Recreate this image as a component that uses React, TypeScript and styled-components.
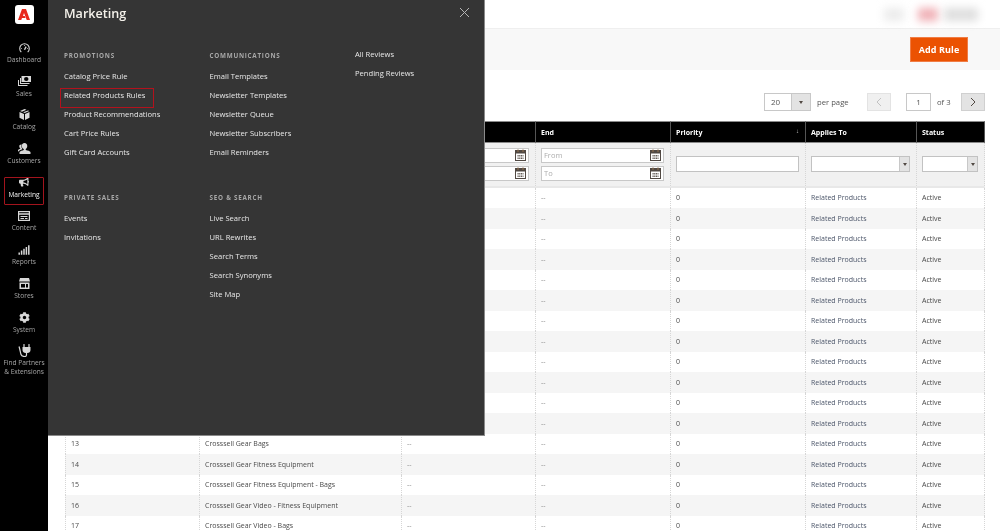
import React from "react";
import styled, { createGlobalStyle } from "styled-components";
import { FaBullhorn, FaCog, FaSignal } from "react-icons/fa";

const Global = createGlobalStyle`
  html, body { margin: 0; padding: 0; height: 531px; overflow: hidden; background: #fff; }
  body { font-family: "Open Sans", "Liberation Sans", sans-serif; color: #303030; }
  * { box-sizing: border-box; }
`;

const Shell = styled.div`
  display: flex;
  position: relative;
  width: 1000px;
  height: 531px;
  overflow: hidden;
  will-change: transform;
`;

const Sidebar = styled.nav`
  flex: 0 0 48px;
  background: #000;
  display: flex;
  flex-direction: column;
  align-items: center;
  padding-top: 5px;
`;

const Logo = styled.div`
  width: 19px;
  height: 19px;
  border-radius: 3px;
  background: #fff;
  display: flex;
  align-items: center;
  justify-content: center;
  margin-bottom: 17px;
`;

const NavItem = styled.a<{ $active?: boolean }>`
  position: relative;
  display: flex;
  flex-direction: column;
  align-items: center;
  width: 48px;
  height: 33.7px;
  color: ${(p) => (p.$active ? "#f4f4f4" : "#a6a6a6")};
  font-size: 6.6px;
  line-height: 9px;
  text-align: center;
  white-space: nowrap;
  ${(p) =>
    p.$active
      ? `&::after { content: ""; position: absolute; left: 4px; top: 1px; width: 38px; height: 26px; border: 1px solid #a3141d; border-radius: 1px; }`
      : ""}
`;

const NavIcon = styled.span`
  height: 13px;
  margin-bottom: 1px;
  color: #d8d8d8;
  display: flex;
  align-items: center;
  justify-content: center;
  font-size: 10px;
`;

const Main = styled.main`
  flex: 1;
  min-width: 0;
  display: flex;
  flex-direction: column;
`;

const TopBar = styled.header`
  height: 29px;
  flex: none;
  display: flex;
  justify-content: flex-end;
  align-items: center;
  padding-right: 22px;
  border-bottom: 1px solid #efefef;
`;

const Blur = styled.span<{ $w: number; $c: string; $mr?: number }>`
  width: ${(p) => p.$w}px;
  height: 13px;
  background: ${(p) => p.$c};
  filter: blur(4px);
  margin-right: ${(p) => p.$mr ?? 0}px;
`;

const ActionBar = styled.div`
  height: 41px;
  flex: none;
  background: #f8f8f8;
  display: flex;
  justify-content: flex-end;
  align-items: flex-start;
  padding: 8px 32px 0 0;
`;

const AddButton = styled.button`
  width: 58px;
  height: 25px;
  background: #eb5202;
  border: 1px solid #f07d45;
  color: #fff;
  font: 700 9px "Open Sans", sans-serif;
  letter-spacing: 0.1px;
  padding: 0;
`;

const Pager = styled.div`
  height: 51px;
  flex: none;
  display: flex;
  justify-content: flex-end;
  align-items: flex-start;
  padding: 23px 15px 0 0;
  font-size: 8px;
  color: #555;
`;

const PageSelect = styled.div`
  width: 47px;
  height: 18px;
  display: flex;
  border: 1px solid #c8c8c8;
  background: #fff;
  margin-right: 6px;
`;

const PageValue = styled.span`
  flex: 1;
  padding-left: 6px;
  line-height: 16px;
`;

const Arrow = styled.span<{ $w: number }>`
  width: ${(p) => p.$w}px;
  flex: none;
  align-self: stretch;
  background: #e3e3e3;
  border-left: 1px solid #c8c8c8;
  display: flex;
  align-items: center;
  justify-content: center;
  &::after {
    content: "";
    border-left: 2.5px solid transparent;
    border-right: 2.5px solid transparent;
    border-top: 3px solid #514943;
  }
`;

const PagerText = styled.span<{ $w: number; $mr: number }>`
  width: ${(p) => p.$w}px;
  line-height: 18px;
  font-size: 7.7px;
  white-space: nowrap;
  margin-right: ${(p) => p.$mr}px;
`;

const PageBtn = styled.span<{ $off?: boolean }>`
  width: 24px;
  height: 18px;
  display: flex;
  align-items: center;
  justify-content: center;
  background: ${(p) => (p.$off ? "#f0f0f0" : "#e3e3e3")};
  border: 1px solid ${(p) => (p.$off ? "#e3e3e3" : "#d0d0d0")};
`;

const PageInput = styled.span`
  width: 25px;
  height: 18px;
  margin: 0 6px 0 15px;
  border: 1px solid #c8c8c8;
  text-align: center;
  line-height: 16px;
`;

const TableWrap = styled.div`
  padding-left: 17px;
`;

const Table = styled.table`
  width: 920px;
  table-layout: fixed;
  border-collapse: separate;
  border-spacing: 0;
  font-size: 7px;
`;

const Th = styled.th`
  height: 22px;
  background: #000;
  color: #fff;
  text-align: left;
  font-weight: 700;
  padding: 0 5px;
  border-top: 1px solid #8a8a8a;
  border-bottom: 1px solid #8a8a8a;
  border-left: 1px solid #555;
  position: relative;
  &:last-child { border-right: 1px solid #555; }
`;

const SortMark = styled.span`
  position: absolute;
  right: 6px;
  top: 5px;
  font-size: 6px;
  color: #ccc;
`;

const FilterCell = styled.td`
  height: 44.5px;
  background: #f1f1f1;
  padding: 0 6px 0 5px;
  border-left: 1px dotted #d6d6d6;
  border-bottom: 2px solid #e8e8e8;
  &:last-child { border-right: 1px dotted #d6d6d6; }
`;

const DateStack = styled.div`
  display: flex;
  flex-direction: column;
  gap: 3px;
`;

const DateField = styled.div`
  height: 15px;
  background: #fff;
  border: 1px solid #c8c8c8;
  display: flex;
  align-items: center;
  padding: 0 2px;
  color: #adadad;
  font-size: 7.5px;
`;

const DateLabel = styled.span`
  flex: 1;
`;

const TextField = styled.div`
  height: 16px;
  background: #fff;
  border: 1px solid #c2c2c2;
`;

const SelectField = styled.div`
  height: 16px;
  background: #fff;
  border: 1px solid #c2c2c2;
  display: flex;
  justify-content: flex-end;
`;

const Row = styled.tr<{ $odd: boolean }>`
  background: ${(p) => (p.$odd ? "#f5f5f5" : "#fff")};
`;

const Td = styled.td<{ $tone: string }>`
  height: 20.5px;
  padding: 0 5px;
  color: ${(p) => p.$tone};
  border-left: 1px dotted #d6d6d6;
  white-space: nowrap;
  overflow: hidden;
  &:last-child { border-right: 1px dotted #d6d6d6; }
`;

const Panel = styled.aside`
  position: absolute;
  left: 48px;
  top: 0;
  width: 437px;
  height: 436px;
  background: #353535;
  border-right: 1px solid #8a8a8a;
  border-bottom: 1px solid #8a8a8a;
  padding: 0 0 0 16px;
  color: #efefef;
`;

const PanelTitle = styled.h1`
  margin: 0;
  height: 45px;
  padding-top: 5px;
  font-size: 12.6px;
  line-height: 18px;
  font-weight: 600;
  color: #f4f1ea;
`;

const Close = styled.span`
  position: absolute;
  right: 14px;
  top: 7px;
  display: block;
  line-height: 0;
`;

const Columns = styled.div`
  display: grid;
  grid-template-columns: 145.5px 145.5px 100px;
`;

const Column = styled.div`
  display: flex;
  flex-direction: column;
  gap: 25px;
`;

const Group = styled.section``;

const Heading = styled.h2`
  margin: 5px 0 5px;
  height: 12px;
  font-size: 6.3px;
  line-height: 12px;
  font-weight: 700;
  letter-spacing: 0.75px;
  text-transform: uppercase;
  color: #a8a8a8;
`;

const MenuLink = styled.a<{ $mark?: boolean }>`
  position: relative;
  display: block;
  height: 19px;
  font-size: 7.6px;
  line-height: 19px;
  color: #e8e8e8;
  ${(p) =>
    p.$mark
      ? `&::after { content: ""; position: absolute; left: -4px; top: 2px; width: 92px; height: 18px; border: 1px solid #b3121d; }`
      : ""}
`;

const AdobeMark = () => (
  <svg width="12" height="11" viewBox="0 0 24 22" fill="#e8291c">
    <path d="M8 0H16L24 22H17.5L12 8 10 14H13.5L15 18H8L6.5 22H0Z" />
  </svg>
);

const Gauge = () => (
  <svg width="11" height="10" viewBox="0 0 24 22" fill="none" stroke="currentColor" strokeWidth="2.4">
    <path d="M5 20a10.5 10.5 0 1 1 14 0" />
    <path d="M12 15l3.5-7" strokeWidth="3" />
    <path d="M12 5v1.5M5 12h1.5M17.5 12H19" />
  </svg>
);

const Cash = () => (
  <svg width="13" height="10" viewBox="0 0 26 20" fill="currentColor">
    <path d="M7 0h19v12H7zM12 6a4.5 4 0 0 0 9 0 4.5 4 0 0 0-9 0z" fillRule="evenodd" />
    <path d="M4 4h2v10h17v2H4zM0 8h2v10h17v2H0z" />
  </svg>
);

const Cube = () => (
  <svg width="11" height="11" viewBox="0 0 22 22" fill="currentColor">
    <path d="M11 0l4 1.7-9 4L2 4zM18 3l2.5 1-9 4.2-3.2-1.500zM1 6l9 4.200V22l-9-4.500zM21 6v11.500L12 22V10.200z" />
  </svg>
);

const People = () => (
  <svg width="13" height="11" viewBox="0 0 26 22" fill="currentColor">
    <path d="M13 0c3.600 0 5.500 2.700 5.500 6 0 2.600-1.200 5-3 6.200v1.800c4 1 8.500 2.200 9.500 4v4H3v-4c1-1.800 5.500-3 8.500-4v-1.800C9 10.800 7.500 8.600 7.500 6 7.500 2.700 9.400 0 13 0z" />
    <path d="M6.500 3c.3 0 .6 0 .9.100C6.300 5.800 6.600 9 8.500 11.500v1.200C5.500 13.700 2.300 15 1 17H0v-3c1-1 3-1.800 4.500-2.300v-1C3.200 9.800 2.500 8.200 2.500 6.500 2.500 4.500 4 3 6.500 3z" />
  </svg>
);

const Card = () => (
  <svg width="12" height="10" viewBox="0 0 24 20" fill="none" stroke="currentColor">
    <rect x="1.200" y="1.200" width="21.600" height="17.600" strokeWidth="2.400" />
    <path d="M2 6h20" strokeWidth="3" />
    <path d="M5 11h14M5 15h7M14 15h5" strokeWidth="2.200" />
  </svg>
);

const Store = () => (
  <svg width="11" height="11" viewBox="0 0 22 22" fill="currentColor">
    <path d="M2 0h18l2 7H0zM1 9h20v13H1zM4 12v7h8v-7zM14 12v7h4v-7z" fillRule="evenodd" />
  </svg>
);

const PlugCord = () => (
  <svg width="13" height="13" viewBox="0 0 26 26" fill="none" stroke="currentColor">
    <path d="M12 1v5M22 1v5" strokeWidth="2.400" strokeLinecap="round" />
    <path d="M9 6h16v6c0 4-3 6-6 6h-4c-3 0-6-2-6-6z" fill="currentColor" stroke="none" />
    <path d="M17 18v4c0 2-1.500 3-3.500 3S7 24 6 21 3.500 9 2 5" strokeWidth="2.400" />
  </svg>
);

const CalIcon = () => (
  <svg width="11" height="12" viewBox="0 0 22 24">
    <rect x="1" y="3" width="20" height="20" fill="#fff" stroke="#514943" strokeWidth="2" />
    <rect x="1" y="3" width="20" height="6" fill="#514943" />
    <path d="M6 1v5M16 1v5" stroke="#8a6d4f" strokeWidth="2.400" />
    <path d="M5 13h12M5 16h12M5 19h12" stroke="#514943" strokeWidth="1.800" strokeDasharray="2.400 1" />
  </svg>
);

const Chevron = ({ dir, color }: { dir: "left" | "right"; color: string }) => (
  <svg width="6" height="10" viewBox="0 0 6 10" fill="none" stroke={color} strokeWidth="1">
    <path d={dir === "left" ? "M5 1L1 5l4 4" : "M1 1l4 4-4 4"} />
  </svg>
);

const navItems: { label: React.ReactNode; icon: React.ReactNode; active?: boolean }[] = [
  { label: "Dashboard", icon: <Gauge /> },
  { label: "Sales", icon: <Cash /> },
  { label: "Catalog", icon: <Cube /> },
  { label: "Customers", icon: <People /> },
  { label: "Marketing", icon: <FaBullhorn />, active: true },
  { label: "Content", icon: <Card /> },
  { label: "Reports", icon: <FaSignal size={12} /> },
  { label: "Stores", icon: <Store /> },
  { label: "System", icon: <FaCog size={11} /> },
  { label: <>Find Partners<br />&amp; Extensions</>, icon: <PlugCord /> },
];

// Rows 1 to 12 lie under the open menu: their first columns are never seen.
const visibleRows: Record<number, string> = {
  13: "Crosssell Gear Bags",
  14: "Crosssell Gear Fitness Equipment",
  15: "Crosssell Gear Fitness Equipment - Bags",
  16: "Crosssell Gear Video - Fitness Equipment",
  17: "Crosssell Gear Video - Bags",
};
const rowIds = Array.from({ length: 17 }, (_, i) => i + 1);

const menu: { heading?: string; links: string[] }[][] = [
  [
    { heading: "Promotions", links: ["Catalog Price Rule", "Related Products Rules", "Product Recommendations", "Cart Price Rules", "Gift Card Accounts"] },
    { heading: "Private Sales", links: ["Events", "Invitations"] },
  ],
  [
    { heading: "Communications", links: ["Email Templates", "Newsletter Templates", "Newsletter Queue", "Newsletter Subscribers", "Email Reminders"] },
    { heading: "SEO & Search", links: ["Live Search", "URL Rewrites", "Search Terms", "Search Synonyms", "Site Map"] },
  ],
  [{ links: ["All Reviews", "Pending Reviews"] }],
];

const widths = [134, 202, 134, 135, 135, 111, 69];

const DateFilter = ({ labelled }: { labelled?: boolean }) => (
  <DateStack>
    <DateField><DateLabel>{labelled ? "From" : ""}</DateLabel><CalIcon /></DateField>
    <DateField><DateLabel>{labelled ? "To" : ""}</DateLabel><CalIcon /></DateField>
  </DateStack>
);

export default function App() {
  return (
    <Shell>
      <Global />
      <Sidebar>
        <Logo><AdobeMark /></Logo>
        {navItems.map((n, i) => (
          <NavItem key={i} $active={n.active}>
            <NavIcon>{n.icon}</NavIcon>
            {n.label}
          </NavItem>
        ))}
      </Sidebar>
      <Main>
        <TopBar>
          <Blur $w={20} $c="#ececec" $mr={14} />
          <Blur $w={20} $c="#f0b0b6" $mr={6} />
          <Blur $w={34} $c="#dedede" />
        </TopBar>
        <ActionBar>
          <AddButton>Add Rule</AddButton>
        </ActionBar>
        <Pager>
          <PageSelect>
            <PageValue>20</PageValue>
            <Arrow $w={19} />
          </PageSelect>
          <PagerText $w={31} $mr={19}>per page</PagerText>
          <PageBtn $off><Chevron dir="left" color="#c2c2c2" /></PageBtn>
          <PageInput>1</PageInput>
          <PagerText $w={13} $mr={11}>of 3</PagerText>
          <PageBtn><Chevron dir="right" color="#514943" /></PageBtn>
        </Pager>
        <TableWrap>
          <Table>
            <colgroup>
              {widths.map((w, i) => <col key={i} style={{ width: w }} />)}
            </colgroup>
            <thead>
              <tr>
                <Th />
                <Th />
                <Th />
                <Th>End</Th>
                <Th>Priority<SortMark>↓</SortMark></Th>
                <Th>Applies To</Th>
                <Th>Status</Th>
              </tr>
              <tr>
                <FilterCell><TextField /></FilterCell>
                <FilterCell><TextField /></FilterCell>
                <FilterCell><DateFilter /></FilterCell>
                <FilterCell><DateFilter labelled /></FilterCell>
                <FilterCell><TextField /></FilterCell>
                <FilterCell><SelectField><Arrow $w={10} /></SelectField></FilterCell>
                <FilterCell><SelectField><Arrow $w={10} /></SelectField></FilterCell>
              </tr>
            </thead>
            <tbody>
              {rowIds.map((id) => {
                const name = visibleRows[id];
                return (
                  <Row key={id} $odd={id % 2 === 0}>
                    <Td $tone="#4a4a4a">{name ? id : ""}</Td>
                    <Td $tone="#4a4a4a">{name ?? ""}</Td>
                    <Td $tone="#888">{name ? "--" : ""}</Td>
                    <Td $tone="#888">--</Td>
                    <Td $tone="#4a4a4a">0</Td>
                    <Td $tone="#4c566a">Related Products</Td>
                    <Td $tone="#4a4a4a">Active</Td>
                  </Row>
                );
              })}
            </tbody>
          </Table>
        </TableWrap>
      </Main>
      <Panel>
        <PanelTitle>Marketing</PanelTitle>
        <Close>
          <svg width="11" height="11" viewBox="0 0 11 11" stroke="#b5b5b5" strokeWidth="1" fill="none">
            <path d="M1 1l9 9M10 1l-9 9" />
          </svg>
        </Close>
        <Columns>
          {menu.map((col, c) => (
            <Column key={c}>
              {col.map((g, j) => (
                <Group key={j}>
                  {g.heading && <Heading>{g.heading}</Heading>}
                  {g.links.map((l) => (
                    <MenuLink key={l} $mark={l === "Related Products Rules"}>{l}</MenuLink>
                  ))}
                </Group>
              ))}
            </Column>
          ))}
        </Columns>
      </Panel>
    </Shell>
  );
}
